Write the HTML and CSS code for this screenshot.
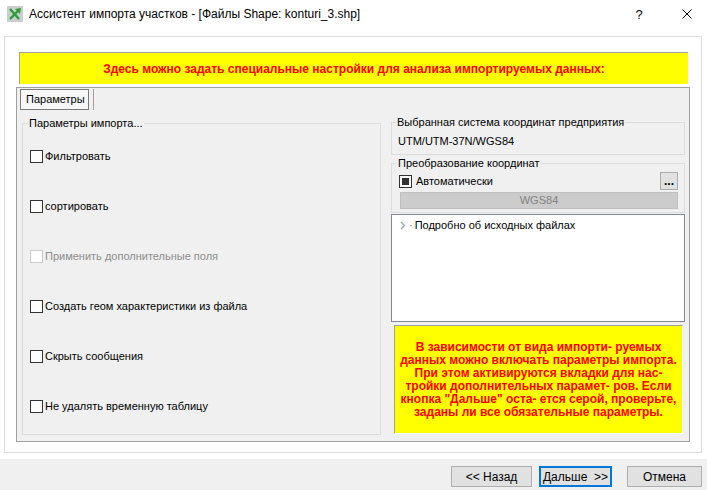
FILE: index.html
```html
<!DOCTYPE html>
<html lang="ru">

<head>
    <meta charset="UTF-8">
    <title>Ассистент импорта участков</title>
    <link rel="stylesheet" href="styles.css">
</head>

<body>

    <div class="titlebar">
        <svg class="app-icon" viewBox="0 0 16 16">
            <rect x="0" y="0" width="16" height="16" fill="#c9cdcd"/>
            <path d="M3 3 L12 13" stroke="#2f9a3a" stroke-width="2.4"/>
            <path d="M3 13 L11 5" stroke="#2f9a3a" stroke-width="2.4"/>
            <path d="M8 3 L14 2 L13 8 Z" fill="#2f9a3a"/>
        </svg>
        <span class="title">Ассистент импорта участков - [Файлы Shape: konturi_3.shp]</span>
        <span class="help">?</span>
        <svg class="close" viewBox="0 0 10 10">
            <path d="M0.5 0.5 L9.5 9.5 M9.5 0.5 L0.5 9.5" stroke="#000" stroke-width="1"/>
        </svg>
    </div>

    <div class="client">
        <div class="frame">
            <div class="banner">Здесь можно задать специальные настройки для анализа импортируемых данных:</div>

            <div class="tabs">
                <div class="tabrow">
                    <div class="tab">Параметры</div>
                    <div class="tab-sep"></div>
                </div>

                <div class="page">
                    <div class="group group-left">
                        <div class="legend">Параметры импорта...</div>
                        <div class="checks">
                            <div class="check"><span class="box"></span>Фильтровать</div>
                            <div class="check"><span class="box"></span>сортировать</div>
                            <div class="check disabled"><span class="box"></span>Применить дополнительные поля</div>
                            <div class="check"><span class="box"></span>Создать геом характеристики из файла</div>
                            <div class="check"><span class="box"></span>Скрыть сообщения</div>
                            <div class="check"><span class="box"></span>Не удалять временную таблицу</div>
                        </div>
                    </div>

                    <div class="rightcol">
                        <div class="group group-cs">
                            <div class="legend">Выбранная система координат предприятия</div>
                            <div class="cs-value">UTM/UTM-37N/WGS84</div>
                        </div>

                        <div class="group group-conv">
                            <div class="legend">Преобразование координат</div>
                            <div class="conv-row">
                                <div class="check"><span class="box checked"></span>Автоматически</div>
                                <button class="dots">...</button>
                            </div>
                            <div class="wgs">WGS84</div>
                        </div>

                        <div class="tree">
                            <div class="tree-item">
                                <svg class="chev" viewBox="0 0 6 9">
                                    <path d="M1 1 L4.5 4.5 L1 8" stroke="#a6a6a6" stroke-width="1.4" fill="none"/>
                                </svg>
                                <span class="dot">·</span>Подробно об исходных файлах
                            </div>
                        </div>

                        <div class="info">
                            <p>В зависимости от вида импорти- руемых<br>данных можно включать параметры импорта.<br>При этом активируются вкладки для нас-<br>тройки дополнительных парамет- ров. Если<br>кнопка "Дальше" оста- ется серой, проверьте,<br>заданы ли все обязательные параметры.</p>
                        </div>
                    </div>
                </div>
            </div>
        </div>
    </div>

    <div class="footer">
        <button class="btn btn-back">&lt;&lt; Назад</button>
        <button class="btn btn-next">Дальше &nbsp;&gt;&gt;</button>
        <button class="btn btn-cancel">Отмена</button>
    </div>

</body>

</html>
```

FILE: styles.css
```css
* {
    box-sizing: border-box;
}

body {
    margin: 0;
    width: 707px;
    height: 490px;
    overflow: hidden;
    background-color: #f0f0f0;
    font-family: "Liberation Sans", Arial, sans-serif;
    font-size: 11px;
    color: #000;
}

/* ---------- title bar ---------- */

.titlebar {
    height: 30px;
    background-color: #fff;
    display: flex;
    align-items: center;
    padding-left: 7px;
}

.app-icon {
    width: 16px;
    height: 16px;
    margin-right: 6px;
    margin-top: -2px;
}

.title {
    flex: 1;
    font-size: 12px;
    margin-top: -2px;
}

.help {
    width: 14px;
    text-align: center;
    font-size: 13px;
    margin-right: 36px;
    margin-top: -2px;
}

.close {
    width: 10px;
    height: 10px;
    margin-right: 15px;
    margin-top: -2px;
}

/* ---------- main area ---------- */

.client {
    background-color: #fff;
    padding: 6px 5px 6px 4px;
}

.frame {
    height: 417px;
    border: 1px solid #dcdcdc;
    padding: 15px 11px 10px 11px;
}

.banner {
    height: 32px;
    margin: 0 2px 3px 3px;
    background-color: #ffff00;
    border-top: 1px solid #a0a0a0;
    border-left: 1px solid #a0a0a0;
    color: #ff0000;
    font-size: 12px;
    font-weight: bold;
    display: flex;
    align-items: center;
    justify-content: center;
}

.tabs {
    height: 355px;
    border: 1px solid #a0a0a0;
    background-color: #f0f0f0;
    padding: 1px 4px 6px 5px;
}

.tabrow {
    display: flex;
    height: 21px;
    margin-left: -2px;
}

.tab {
    width: 69px;
    border: 1px solid #7a7a7a;
    background-color: #f7f7f7;
    padding-left: 5px;
    line-height: 19px;
}

.tab-sep {
    width: 1px;
    margin-left: 4px;
    background-color: #a0a0a0;
}

.page {
    display: flex;
    gap: 10px;
    margin-top: 13px;
}

.group {
    border: 1px solid #dcdcdc;
    padding: 0 6px 0 7px;
}

.legend {
    width: fit-content;
    margin: -8px 0 0 -2px;
    padding: 0 1px;
    line-height: 14px;
    background-color: #f0f0f0;
}

.group-left {
    width: 359px;
    height: 312px;
}

.checks {
    display: flex;
    flex-direction: column;
    gap: 36px;
    padding-top: 19px;
}

.check {
    display: flex;
    align-items: center;
    height: 14px;
}

.box {
    width: 13px;
    height: 13px;
    border: 1px solid #333;
    background-color: #fff;
    margin-right: 2px;
    display: flex;
    align-items: center;
    justify-content: center;
}

.box.checked::after {
    content: "";
    width: 7px;
    height: 7px;
    background-color: #333;
}

.check.disabled {
    color: #8d8d8d;
}

.check.disabled .box {
    border-color: #cccccc;
}

/* ---------- right column ---------- */

.rightcol {
    width: 294px;
    display: flex;
    flex-direction: column;
}

.group-cs {
    height: 33px;
    margin-top: -1px;
    padding-left: 6px;
}

.cs-value {
    margin-top: 5px;
    line-height: 14px;
}

.group-conv {
    height: 50px;
    margin-top: 8px;
    padding-left: 7px;
}

.conv-row {
    display: flex;
    align-items: center;
    height: 18px;
    margin-top: 2px;
}

.conv-row .box {
    margin-right: 4px;
}

.dots {
    margin-left: auto;
    width: 18px;
    height: 18px;
    padding: 0;
    border: 1px solid #adadad;
    background-color: #e1e1e1;
    font-family: "Liberation Sans", Arial, sans-serif;
    font-weight: bold;
    font-size: 12px;
    line-height: 12px;
}

.wgs {
    height: 17px;
    margin-top: 2px;
    margin-left: 1px;
    background-color: #cccccc;
    border: 1px solid #bfbfbf;
    color: #838383;
    text-align: center;
    line-height: 15px;
}

.tree {
    height: 108px;
    margin-top: 1px;
    background-color: #fff;
    border: 1px solid #828790;
    padding: 3px 8px;
}

.tree-item {
    display: flex;
    align-items: center;
    height: 14px;
}

.chev {
    width: 6px;
    height: 9px;
    margin-right: 3px;
}

.dot {
    margin-right: 2px;
    color: #555;
}

.info {
    height: 109px;
    margin: 3px 2px 0 3px;
    background-color: #ffff00;
    border-top: 1px solid #a0a0a0;
    border-left: 1px solid #a0a0a0;
    border-right: 1px solid #fff;
    border-bottom: 1px solid #fff;
    color: #ff0000;
    font-size: 12px;
    font-weight: bold;
    display: flex;
    align-items: center;
    justify-content: center;
}

.info p {
    margin: 0;
    text-align: center;
    line-height: 13px;
}

/* ---------- buttons ---------- */

.footer {
    height: 31px;
    display: flex;
    justify-content: flex-end;
    align-items: flex-start;
    padding-top: 7px;
    padding-right: 5px;
}

.btn {
    height: 21px;
    padding: 0;
    border: 1px solid #adadad;
    background-color: #e1e1e1;
    font-family: "Liberation Sans", Arial, sans-serif;
    font-size: 12px;
    color: #000;
}

.btn-back {
    width: 81px;
    margin-right: 7px;
}

.btn-next {
    width: 73px;
    margin-right: 15px;
    border: 2px solid #0078d7;
}

.btn-cancel {
    width: 75px;
}
```
